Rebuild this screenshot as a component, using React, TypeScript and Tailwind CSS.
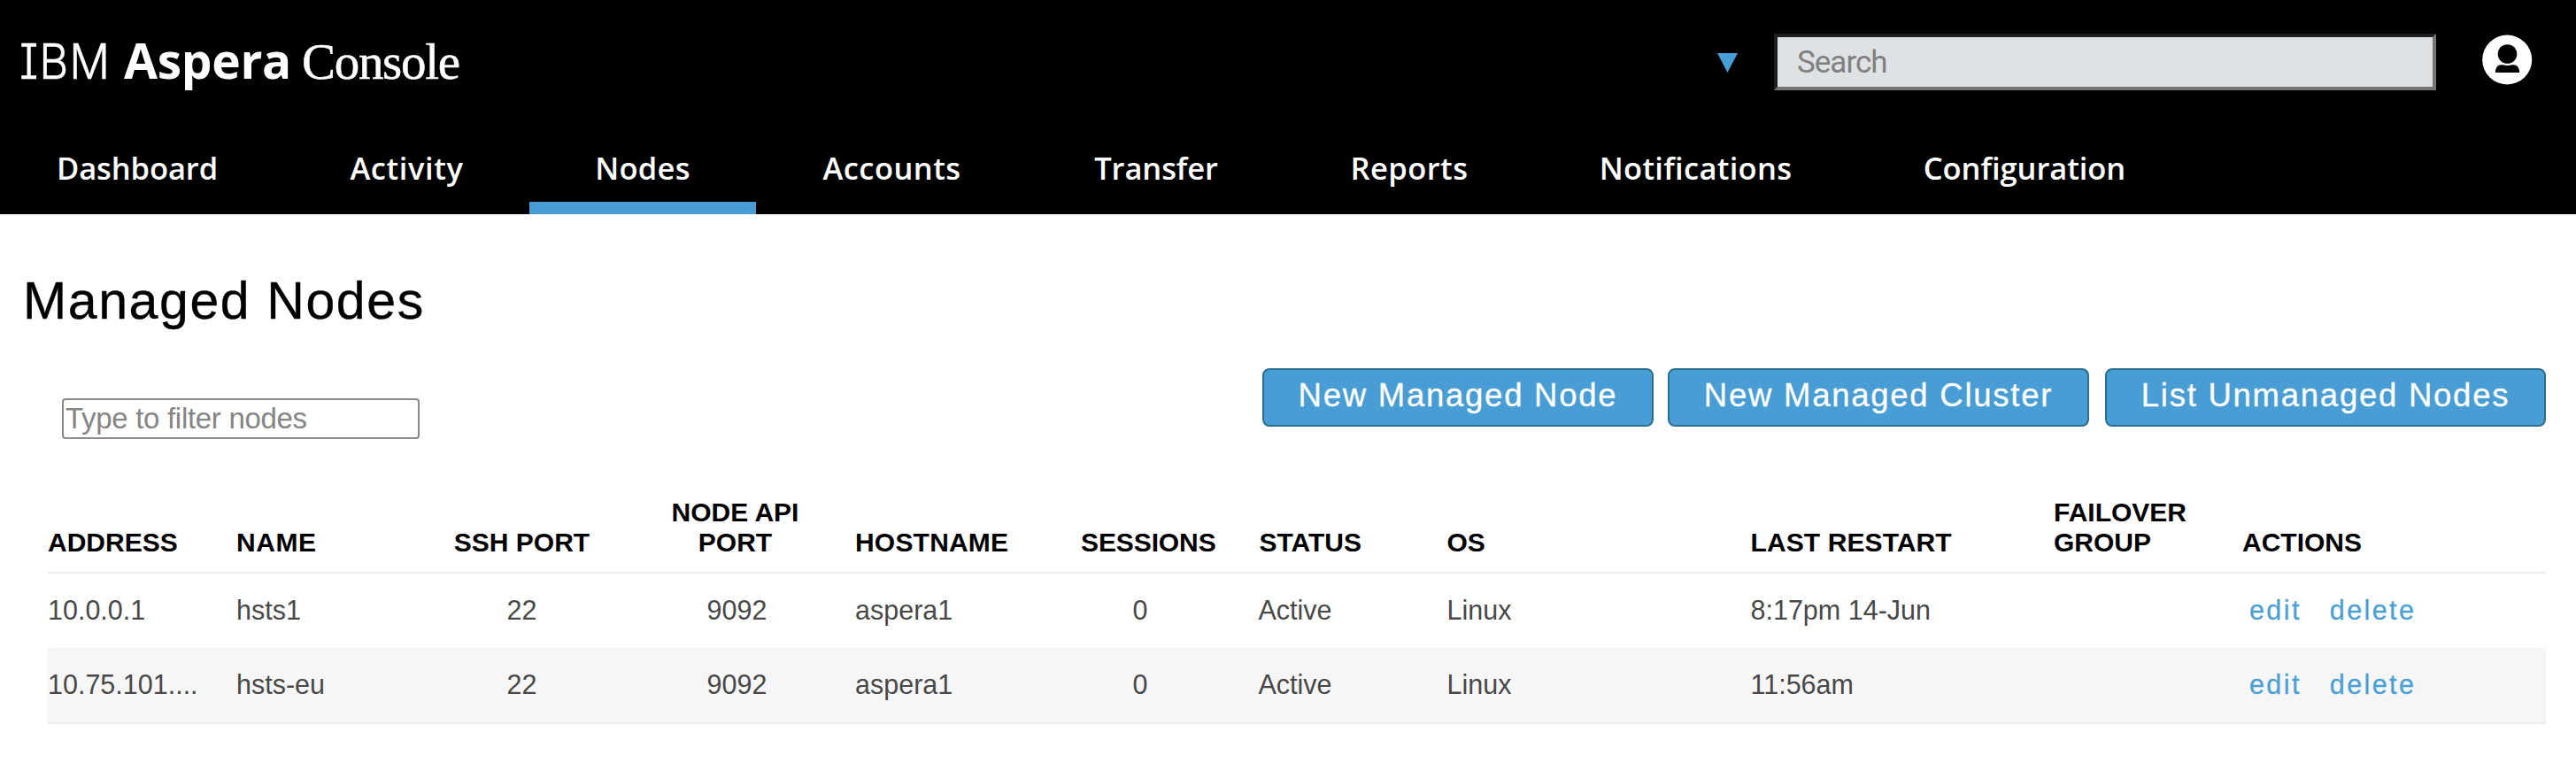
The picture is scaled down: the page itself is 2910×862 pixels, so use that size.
const navItems = [
  { label: 'Dashboard', className: 'w-[320px] pr-[10px] tracking-[-0.1px]' },
  { label: 'Activity', className: 'w-[278px] pl-px tracking-[0.6px]' },
  { label: 'Nodes', className: 'w-[256px] tracking-[0.3px]', active: true },
  { label: 'Accounts', className: 'w-[307px] tracking-[0.45px]' },
  { label: 'Transfer', className: 'w-[290px] tracking-[-0.1px]' },
  { label: 'Reports', className: 'w-[282px] tracking-[0.45px]' },
  { label: 'Notifications', className: 'w-[365px] tracking-[0.3px]' },
  { label: 'Configuration', className: 'w-[378px] tracking-[-0.05px]' },
];

const nodes = [
  { address: '10.0.0.1', name: 'hsts1', ssh: 22, api: 9092, host: 'aspera1', sessions: 0, status: 'Active', os: 'Linux', restart: '8:17pm 14-Jun' },
  { address: '10.75.101....', name: 'hsts-eu', ssh: 22, api: 9092, host: 'aspera1', sessions: 0, status: 'Active', os: 'Linux', restart: '11:56am' },
];

const columns =
  'grid grid-cols-[213px_213px_219px_267px_255px_200.5px_213px_342px_342.5px_214px_1fr]';

function UserIcon() {
  return (
    <svg className="mt-[39px] ml-[52px] h-[57px] w-[57px] shrink-0" viewBox="0 0 57 57">
      <circle cx="28.2" cy="28.5" r="28" fill="#fff" />
      <path d="M14.8 43C15 37.5 17.5 34.3 21.5 34.3H35.5C39.5 34.3 42 37.5 42.2 43Z" fill="#000" />
      <circle cx="28.5" cy="22" r="13" fill="#fff" />
      <circle cx="28.5" cy="22" r="10.8" fill="#000" />
    </svg>
  );
}

function Header() {
  return (
    <header className="flex h-[242px] flex-col bg-black text-white">
      <div className="flex h-[152px] items-start">
        <div className="flex items-baseline pt-7 pl-[22px] leading-[80px]">
          <span className="w-[118px] origin-left scale-x-[0.925] font-['Inter',sans-serif] text-[55px] font-light tracking-[1px] [font-feature-settings:'cv08'] [-webkit-text-stroke:0.5px_white]">IBM</span>
          <span className="w-[199px] font-['Open_Sans',sans-serif] text-[55px] font-bold tracking-[-0.3px]">Aspera</span>
          <span className="pl-[2px] font-['Liberation_Serif',serif] text-[57px] tracking-[-1.3px] [-webkit-text-stroke:0.5px_white]">Console</span>
        </div>
        <div className="ml-auto flex items-start pr-[49px]">
          <svg className="mt-[60px] mr-[41px] h-[22px] w-[23px]" viewBox="0 0 23 22">
            <path d="M0 0H23L11.5 22Z" fill="#489fd8" />
          </svg>
          <input
            type="text"
            placeholder="Search"
            className="mt-[38px] h-[64px] w-[748px] border-4 border-t-[#1e1e1e] border-r-[#767676] border-b-[#767676] border-l-[#1e1e1e] bg-[#dee2e5] pl-[22px] font-['Roboto',sans-serif] text-[35px] tracking-[-1px] placeholder:text-[#808080]"
          />
          <UserIcon />
        </div>
      </div>
      <nav className="flex font-['Open_Sans',sans-serif] text-[34.5px] leading-[76px] font-semibold">
        {navItems.map((item) => (
          <div key={item.label} className={'flex flex-col text-center ' + item.className}>
            <a>{item.label}</a>
            {item.active && <span className="h-[14px] bg-[#489dd5]" />}
          </div>
        ))}
      </nav>
    </header>
  );
}

function ActionButton({ label, width }: { label: string; width: string }) {
  return (
    <button
      className={
        'h-[66px] rounded-[8px] border-2 border-[#2d6f8f] bg-[#489dd5] pb-[3px] text-center text-[36.5px] leading-none tracking-[1.75px] whitespace-nowrap text-white [-webkit-text-stroke:0.3px_white] ' + width
      }
    >
      {label}
    </button>
  );
}

export default function App() {
  return (
    <div className="min-h-[862px] bg-white font-['Liberation_Sans',sans-serif] text-black">
      <Header />
      <main>
        <h1 className="pt-[58px] pl-[26px] text-[59px] leading-[80px] tracking-[1.6px] [-webkit-text-stroke:0.4px_black]">Managed Nodes</h1>
        <div className="flex justify-between pt-[36px] pr-[34px] pl-[70px]">
          <input
            type="text"
            placeholder="Type to filter nodes"
            className="mt-[34px] h-[46px] w-[404px] rounded-[4px] border-2 border-[#8a8a8a] pb-px pl-[2px] text-[33px] tracking-[-0.3px] placeholder:text-[#858585]"
          />
          <div className="flex h-[66px]">
            <ActionButton label="New Managed Node" width="mr-[16px] w-[442px]" />
            <ActionButton label="New Managed Cluster" width="mr-[18px] w-[476px]" />
            <ActionButton label="List Unmanaged Nodes" width="w-[498px]" />
          </div>
        </div>
        <div className="mt-[66px] mr-[34px] ml-[54px]">
          <div className={columns + ' h-[86px] items-end border-b-2 border-[#ebebeb] pb-[16px] text-[30px] leading-[34px] font-bold whitespace-nowrap'}>
            <div>ADDRESS</div>
            <div className="tracking-[0.6px]">NAME</div>
            <div className="text-center">SSH PORT</div>
            <div className="pr-[4px] text-center">NODE API<br />PORT</div>
            <div className="tracking-[0.2px]">HOSTNAME</div>
            <div className="tracking-[-0.1px]">SESSIONS</div>
            <div className="pl-px">STATUS</div>
            <div>OS</div>
            <div className="pl-px tracking-[0.1px]">LAST RESTART</div>
            <div className="pl-px">FAILOVER<br />GROUP</div>
            <div>ACTIONS</div>
          </div>
          {nodes.map((n) => (
            <div
              key={n.name}
              className={columns + ' items-center pb-px text-[30.5px] whitespace-nowrap text-[#484848] even:h-[84px] odd:h-[86px] odd:border-b-2 odd:border-[#ebebeb] odd:bg-[#f6f6f6]'}
            >
              <div>{n.address}</div>
              <div>{n.name}</div>
              <div className="text-center">{n.ssh}</div>
              <div className="text-center">{n.api}</div>
              <div>{n.host}</div>
              <div className="w-[134px] text-center">{n.sessions}</div>
              <div>{n.status}</div>
              <div>{n.os}</div>
              <div className="pl-px">{n.restart}</div>
              <div />
              <div className="flex gap-[32px] pl-[8px] tracking-[2.4px] text-[#4a9fd5] [-webkit-text-stroke:0.3px_#4a9fd5]">
                <a>edit</a>
                <a>delete</a>
              </div>
            </div>
          ))}
        </div>
      </main>
    </div>
  );
}
